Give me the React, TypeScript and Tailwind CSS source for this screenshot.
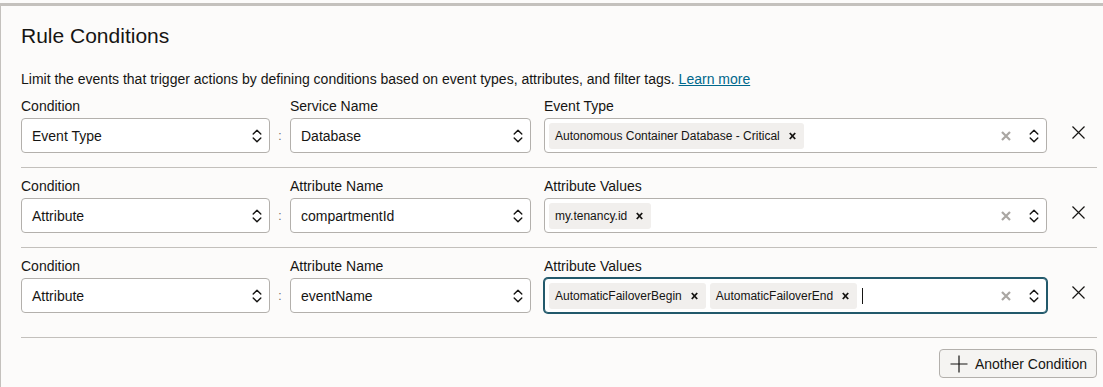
import React from "react";

const Chevrons = () => (
  <svg width="10" height="16" viewBox="0 0 10 16" fill="none" stroke="#161513" strokeWidth="1.4" strokeLinecap="round" strokeLinejoin="round">
    <path d="M1.2 6 L5 2.2 L8.8 6" />
    <path d="M1.2 10 L5 13.8 L8.8 10" />
  </svg>
);

const ClearX = () => (
  <svg width="10" height="10" viewBox="0 0 10 10" stroke="#a9a6a2" strokeWidth="2.2" strokeLinecap="butt">
    <path d="M1 1 L9 9 M9 1 L1 9" />
  </svg>
);

const ChipX = () => (
  <svg width="7" height="8" viewBox="0 0 7 8" stroke="#161513" strokeWidth="1.8">
    <path d="M0.8 1 L6.2 7 M6.2 1 L0.8 7" />
  </svg>
);

const CloseX = () => (
  <svg width="13" height="13" viewBox="0 0 13 13" stroke="#161513" strokeWidth="1.2">
    <path d="M0.5 0.5 L12.5 12.5 M12.5 0.5 L0.5 12.5" />
  </svg>
);

const Plus = () => (
  <svg width="18" height="18" viewBox="0 0 18 18" stroke="#161513" strokeWidth="1.2">
    <path d="M9 0.5 V17.5 M0.5 9 H17.5" />
  </svg>
);

function Select({ value, width }: { value: string; width: string }) {
  return (
    <div className={`${width} h-[35px] bg-white border border-[#b3b0ac] rounded-[4px] flex items-center pl-[10px] pr-[7px]`}>
      <span className="flex-1 text-[14px] leading-[18px]">{value}</span>
      <Chevrons />
    </div>
  );
}

function Chip({ label }: { label: string }) {
  return (
    <div className="h-[26px] flex items-center bg-[#f1efed] rounded-[3px] pl-[6px] pr-[8px] shrink-0">
      <span className="text-[12px] leading-[14px]">{label}</span>
      <span className="ml-[9px] flex items-center">
        <ChipX />
      </span>
    </div>
  );
}

function MultiSelect({ chips, focused }: { chips: string[]; focused?: boolean }) {
  return (
    <div
      className={
        focused
          ? "w-[503px] h-[35px] bg-white border border-[#22596b] shadow-[0_0_0_1px_#22596b] rounded-[4px] flex items-center pl-[4px] pr-[7px]"
          : "w-[503px] h-[35px] bg-white border border-[#b3b0ac] rounded-[4px] flex items-center pl-[4px] pr-[7px]"
      }
    >
      <div className="flex-1 flex items-center gap-[4px]">
        {chips.map((c) => (
          <Chip key={c} label={c} />
        ))}
        {focused && <div className="ml-[1px] w-[1px] h-[16px] bg-[#161513]" />}
      </div>
      <span className="flex items-center mr-[18px]">
        <ClearX />
      </span>
      <Chevrons />
    </div>
  );
}

function Row({
  label2,
  value1,
  value2,
  label3,
  chips,
  focused,
  last,
}: {
  label2: string;
  value1: string;
  value2: string;
  label3: string;
  chips: string[];
  focused?: boolean;
  last?: boolean;
}) {
  return (
    <div className={`pt-[9px] border-b border-[#c3c0bc] ${last ? "pb-[24px]" : "pb-[14px]"}`}>
      <div className="flex items-end">
        <div className="flex flex-col">
          <div className="text-[14px] leading-[18px] mb-[3px]">Condition</div>
          <Select value={value1} width="w-[249px]" />
        </div>
        <div className="w-[20px] h-[35px] flex items-center justify-center text-[12px] text-[#6f6c69]">:</div>
        <div className="flex flex-col">
          <div className="text-[14px] leading-[18px] mb-[3px]">{label2}</div>
          <Select value={value2} width="w-[241px]" />
        </div>
        <div className="flex flex-col ml-[13px]">
          <div className="text-[14px] leading-[18px] mb-[3px]">{label3}</div>
          <MultiSelect chips={chips} focused={focused} />
        </div>
        <div className="h-[35px] flex items-center pl-[25px] pb-[6px]">
          <CloseX />
        </div>
      </div>
    </div>
  );
}

export default function App() {
  return (
    <div className="min-h-[387px] bg-[#fcfbfa] pt-[3px] text-[#161513] font-['Liberation_Sans',Arial,sans-serif]">
      <div className="min-h-[384px] border-t-[3px] border-l border-[#c4c1bd] pl-[20px] pr-[6px] pt-[18px]">
        <h2 className="text-[21px] leading-[24px]">Rule Conditions</h2>
        <p className="mt-[22px] text-[14px] leading-[18px]">
          Limit the events that trigger actions by defining conditions based on event types, attributes, and filter tags.{" "}
          <a href="#" className="text-[#00688c] underline">
            Learn more
          </a>
        </p>
        <Row
          label2="Service Name"
          value1="Event Type"
          value2="Database"
          label3="Event Type"
          chips={["Autonomous Container Database - Critical"]}
        />
        <Row
          label2="Attribute Name"
          value1="Attribute"
          value2="compartmentId"
          label3="Attribute Values"
          chips={["my.tenancy.id"]}
        />
        <Row
          label2="Attribute Name"
          value1="Attribute"
          value2="eventName"
          label3="Attribute Values"
          chips={["AutomaticFailoverBegin", "AutomaticFailoverEnd"]}
          focused
          last
        />
        <div className="flex justify-end pt-[11px]">
          <button className="h-[29px] flex items-center border border-[#b3b0ac] bg-[#f5f4f2] rounded-[4px] pl-[10px] pr-[9px] text-[14px] leading-[18px]">
            <Plus />
            <span className="ml-[7px]">Another Condition</span>
          </button>
        </div>
      </div>
    </div>
  );
}
